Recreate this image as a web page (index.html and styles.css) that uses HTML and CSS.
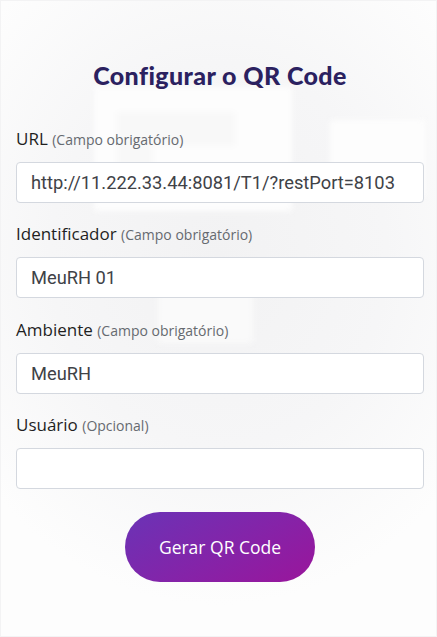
FILE: index.html
```html
<!DOCTYPE html>
<html lang="pt-BR">
<head>
    <meta charset="UTF-8">
    <meta name="viewport" content="width=device-width, initial-scale=1.0">
    <title>Configurar o QR Code</title>
    <link rel="stylesheet" href="styles.css">
</head>
<body>
    <div class="page">
        <div class="backdrop">
            <span class="blk blk-a"></span>
            <span class="blk blk-b"></span>
            <span class="blk blk-c"></span>
            <span class="blk blk-d"></span>
            <span class="blk blk-e"></span>
        </div>

        <h1 class="title">Configurar o QR Code</h1>

        <form class="form">
            <div class="field">
                <label class="label" for="url">URL <small>(Campo obrigatório)</small></label>
                <input class="input" id="url" type="text" value="http://11.222.33.44:8081/T1/?restPort=8103">
            </div>
            <div class="field">
                <label class="label" for="ident">Identificador <small>(Campo obrigatório)</small></label>
                <input class="input" id="ident" type="text" value="MeuRH 01">
            </div>
            <div class="field">
                <label class="label" for="env">Ambiente <small>(Campo obrigatório)</small></label>
                <input class="input" id="env" type="text" value="MeuRH">
            </div>
            <div class="field">
                <label class="label" for="user">Usuário <small>(Opcional)</small></label>
                <input class="input" id="user" type="text" value="">
            </div>
            <div class="actions">
                <button class="btn" type="button">Gerar QR Code</button>
            </div>
        </form>
    </div>
</body>
</html>
```

FILE: styles.css
```css
* {
    box-sizing: border-box;
}
body {
    margin: 0;
    font-family: "Open Sans", Lato, sans-serif;
    color: #222;
    background-color: #fff;
}
.page {
    position: relative;
    min-height: 637px;
    padding: 59px 13px 0 16px;
    box-shadow: inset 0 0 0 1px #f3f3f4;
    background: radial-gradient(ellipse 70% 55% at 50% 40%, #f2f2f3 0%, #f6f6f7 55%, #fdfdfd 100%);
    overflow: hidden;
}
.backdrop {
    position: absolute;
    inset: 0;
    filter: blur(3px);
}
.blk {
    position: absolute;
    background-color: #fdfdfd;
}
.blk-a {
    left: 94px;
    top: 87px;
    width: 198px;
    height: 124px;
}
.blk-b {
    left: 117px;
    top: 112px;
    width: 118px;
    height: 80px;
    background-color: #f8f8f8;
}
.blk-c {
    left: 153px;
    top: 146px;
    width: 82px;
    height: 40px;
}
.blk-d {
    left: 330px;
    top: 120px;
    width: 95px;
    height: 76px;
}
.blk-e {
    left: 158px;
    top: 265px;
    width: 95px;
    height: 78px;
    background-color: #fafafa;
}
.title {
    position: relative;
    margin: 0;
    text-align: center;
    font-family: Lato, sans-serif;
    font-size: 25px;
    line-height: 32px;
    font-weight: 900;
    color: #2b2160;
    letter-spacing: 0.4px;
}
.form {
    position: relative;
    margin-top: 36px;
    display: flex;
    flex-direction: column;
}
.field {
    display: flex;
    flex-direction: column;
    gap: 10px;
    margin-bottom: 19.4px;
}
.label {
    font-size: 17px;
    line-height: 24px;
    color: #1f1f1f;
}
.label small {
    font-size: 14px;
    color: #666a70;
}
.input {
    width: 100%;
    height: 41px;
    padding: 0 14px;
    border: 1px solid #d4d8df;
    border-radius: 4px;
    background-color: #fff;
    font-family: Roboto, sans-serif;
    font-size: 18.3px;
    color: #404247;
    outline: none;
}
.actions {
    display: flex;
    justify-content: center;
    margin-top: 3px;
}
.btn {
    width: 190px;
    height: 70px;
    border: none;
    border-radius: 35px;
    background: linear-gradient(150deg, #6a33b6 0%, #8523a8 55%, #9a159b 100%);
    color: #fff;
    font-family: "Open Sans", sans-serif;
    font-size: 17.5px;
    cursor: pointer;
}
```
